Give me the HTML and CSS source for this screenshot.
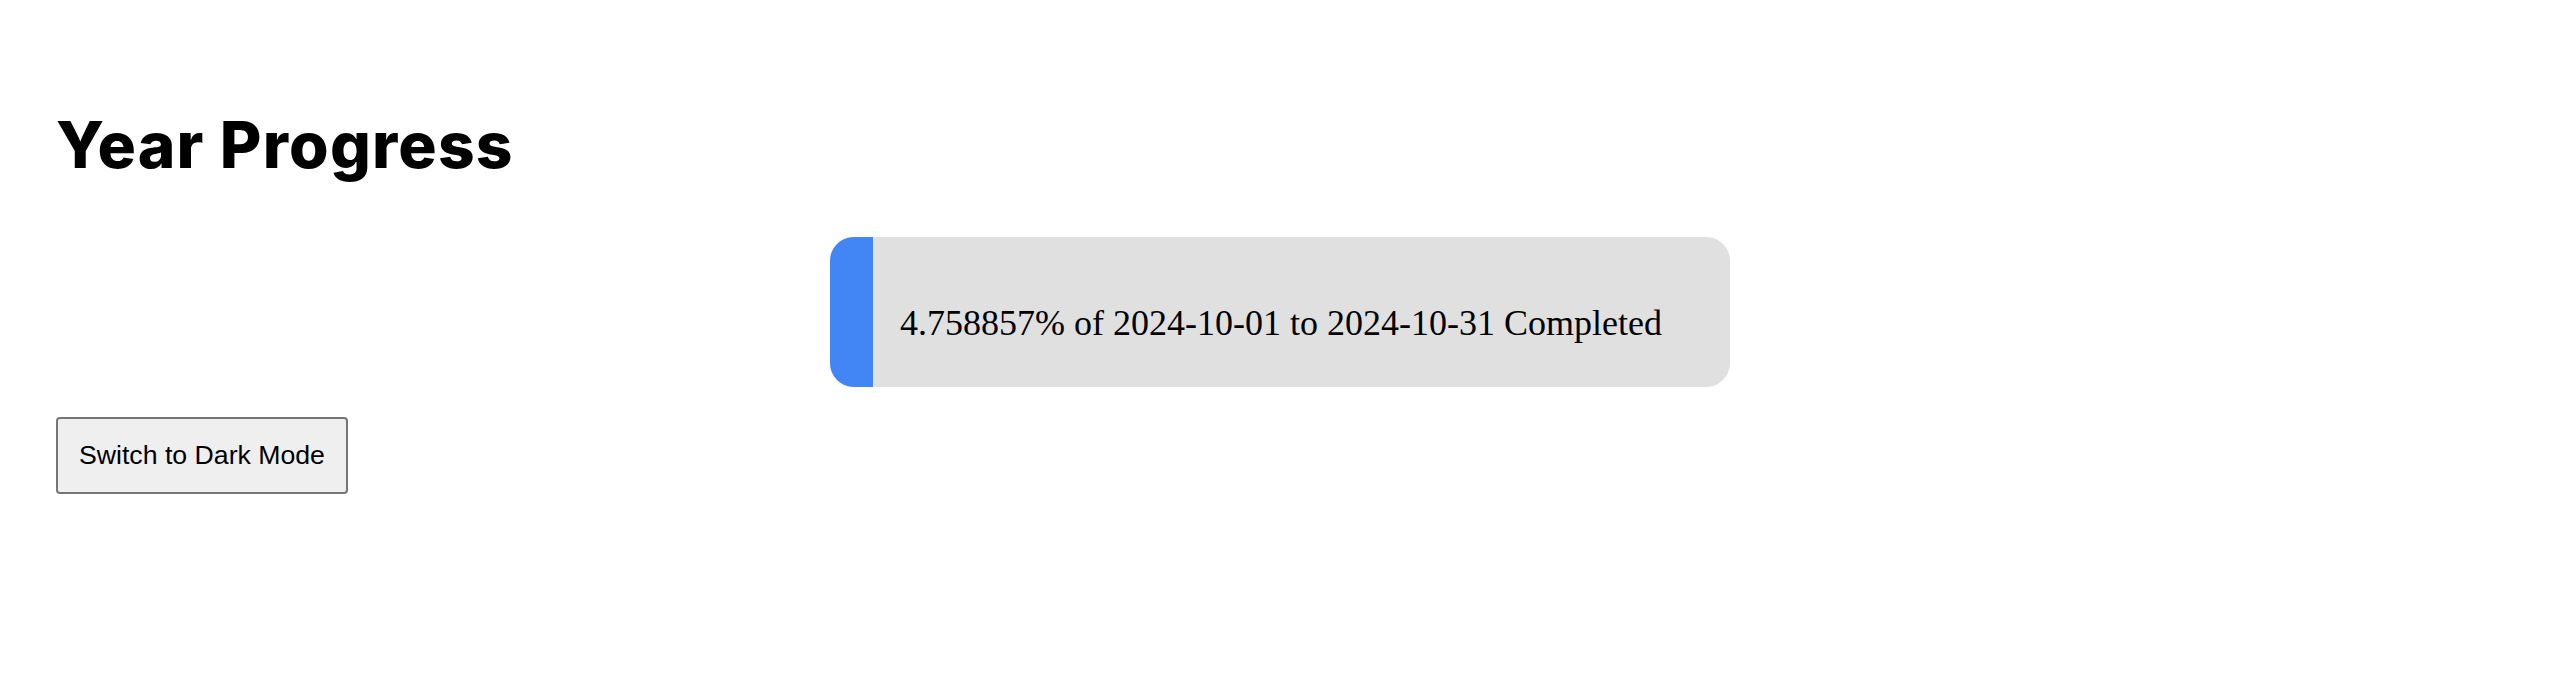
FILE: index.html
```html
<!DOCTYPE html>
<html lang="en">
<head>
<meta charset="utf-8">
<title>Year Progress</title>
<link rel="stylesheet" href="styles.css">
</head>
<body>
<main class="page">
  <h1 class="title">Year Progress</h1>
  <div class="track">
    <div class="fill" style="width: 4.758857%"></div>
    <p class="label">4.758857% of 2024-10-01 to 2024-10-31 Completed</p>
  </div>
  <button class="mode-btn" type="button">Switch to Dark Mode</button>
</main>
</body>
</html>
```

FILE: styles.css
```css
html, body {
  margin: 0;
  padding: 0;
  background: #ffffff;
}

.page {
  padding: 0 56px;
  display: flex;
  flex-direction: column;
  align-items: flex-start;
}

.title {
  margin: 113px 0 0 0;
  font-family: "Inter", "Liberation Sans", sans-serif;
  font-weight: 800;
  font-size: 64px;
  line-height: 64px;
  color: #000000;
  letter-spacing: 1.2px;
}

.track {
  align-self: center;
  width: 900px;
  height: 150px;
  margin-top: 60px;
  background: #e0e0e0;
  border-radius: 24px;
  overflow: hidden;
  display: grid;
}

.fill {
  grid-area: 1 / 1;
  height: 100%;
  background: #4285f4;
}

.label {
  grid-area: 1 / 1;
  margin: 0;
  padding: 68px 0 0 70px;
  font-family: "Liberation Serif", "Times New Roman", serif;
  font-size: 36px;
  line-height: 36px;
  color: #000000;
  white-space: nowrap;
}

.mode-btn {
  margin-top: 30px;
  padding: 21px 21px;
  font-family: "Liberation Sans", Arial, sans-serif;
  font-size: 26.67px;
  color: #000000;
  background: #efefef;
  border: 2px solid #767676;
  border-radius: 4px;
}
```
